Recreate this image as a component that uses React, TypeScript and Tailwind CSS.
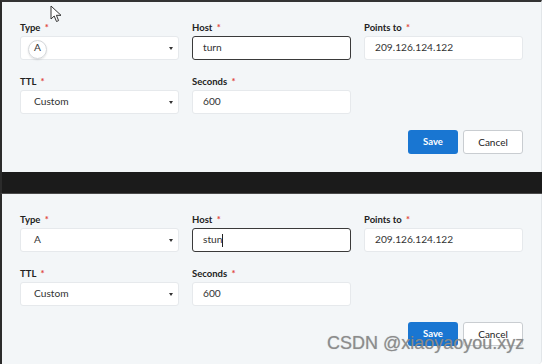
import React from "react";

type Field = { label: string; value: string; kind: "select" | "input"; focused?: boolean; caret?: boolean; ring?: boolean };

const Label: React.FC<{ text: string }> = ({ text }) => (
  <div className="h-[12px] mb-[2px] text-[9.5px] leading-[12px] font-bold text-[#222]">
    {text} <span className="text-[#e0463a] ml-[2px]">*</span>
  </div>
);

const Box: React.FC<{ f: Field }> = ({ f }) => {
  if (f.kind === "select") {
    return (
      <div className="relative h-[24px] bg-white rounded-[3px] border border-[#e6e9ec] flex items-center pl-[13px] text-[10.2px] text-[#333]">
        {f.ring && (
          <span className="absolute left-[7px] top-[3px] w-[19px] h-[19px] rounded-full border border-[#d4d7da] shadow-[0_1px_2px_rgba(0,0,0,0.12)]" />
        )}
        <span className="relative">{f.value}</span>
        <span className="absolute right-[5px] top-[10px] w-0 h-0 border-l-[2.5px] border-r-[2.5px] border-t-[3.5px] border-l-transparent border-r-transparent border-t-[#333]" />
      </div>
    );
  }
  return (
    <div
      className={
        "h-[24px] bg-white rounded-[3px] flex items-center pl-[10px] text-[10.2px] text-[#333] " +
        (f.focused ? "border border-[#3a3a3a]" : "border border-[#e6e9ec]")
      }
    >
      {f.value}
      {f.caret && <span className="inline-block w-px h-[13px] bg-[#222]" />}
    </div>
  );
};

const Panel: React.FC<{ host: string; top?: boolean; caret?: boolean }> = ({ host, top, caret }) => {
  const row1: Field[] = [
    { label: "Type", value: "A", kind: "select", ring: top },
    { label: "Host", value: host, kind: "input", focused: true, caret },
    { label: "Points to", value: "209.126.124.122", kind: "input" },
  ];
  const row2: Field[] = [
    { label: "TTL", value: "Custom", kind: "select" },
    { label: "Seconds", value: "600", kind: "input" },
  ];
  return (
    <div
      className={
        "bg-[#f3f6f8] border-l-2 border-l-[#2b2b2b] border-r border-r-[#e2e6e9] px-[18px] " +
        (top ? "h-[172px] border-t-2 border-t-[#333] pt-[20px]" : "flex-1 pt-[20px] rounded-br-[4px]")
      }
    >
      <div className="grid grid-cols-3 gap-x-[13px] gap-y-[16px]">
        {row1.map((f) => (
          <div key={f.label}>
            <Label text={f.label} />
            <Box f={f} />
          </div>
        ))}
        {row2.map((f) => (
          <div key={f.label}>
            <Label text={f.label} />
            <Box f={f} />
          </div>
        ))}
      </div>
      <div className="flex justify-end gap-[5px] mt-[16px]">
        <button className="w-[50px] h-[24px] rounded-[3px] bg-[#1976d2] text-white text-[9.5px] font-bold">Save</button>
        <button className="w-[60px] h-[24px] rounded-[3px] bg-white border border-[#c9cdd1] text-[#222] text-[10px]">Cancel</button>
      </div>
    </div>
  );
};

export default function App() {
  return (
    <div
      className="relative w-[542px] h-[364px] overflow-hidden bg-white flex flex-col"
      style={{ fontFamily: "Lato, 'Liberation Sans', sans-serif" }}
    >
      <Panel host="turn" top />
      <div className="h-[22px] bg-[#1b1b1b] border-b border-b-[#4a4a4a] border-l-2 border-l-[#2b2b2b]" />
      <Panel host="stun" caret />

      {/* mouse pointer */}
      <svg className="absolute left-[50px] top-[5px]" width="13" height="18" viewBox="0 0 13 18">
        <path d="M1 1 L1 14 L4.2 11 L6.5 16.5 L8.6 15.6 L6.4 10.3 L11 10.3 Z" fill="#fff" stroke="#333" strokeWidth="1" strokeLinejoin="round" />
      </svg>

      <div
        className="absolute left-[327px] top-[333px] text-[18px] leading-[20px] text-[#8c8c8c] whitespace-nowrap"
        style={{ fontFamily: "'Liberation Sans', Arial, sans-serif", textShadow: "0 0 1px rgba(60,60,60,0.35)" }}
      >
        CSDN @xiaoyaoyou.xyz
      </div>
    </div>
  );
}
